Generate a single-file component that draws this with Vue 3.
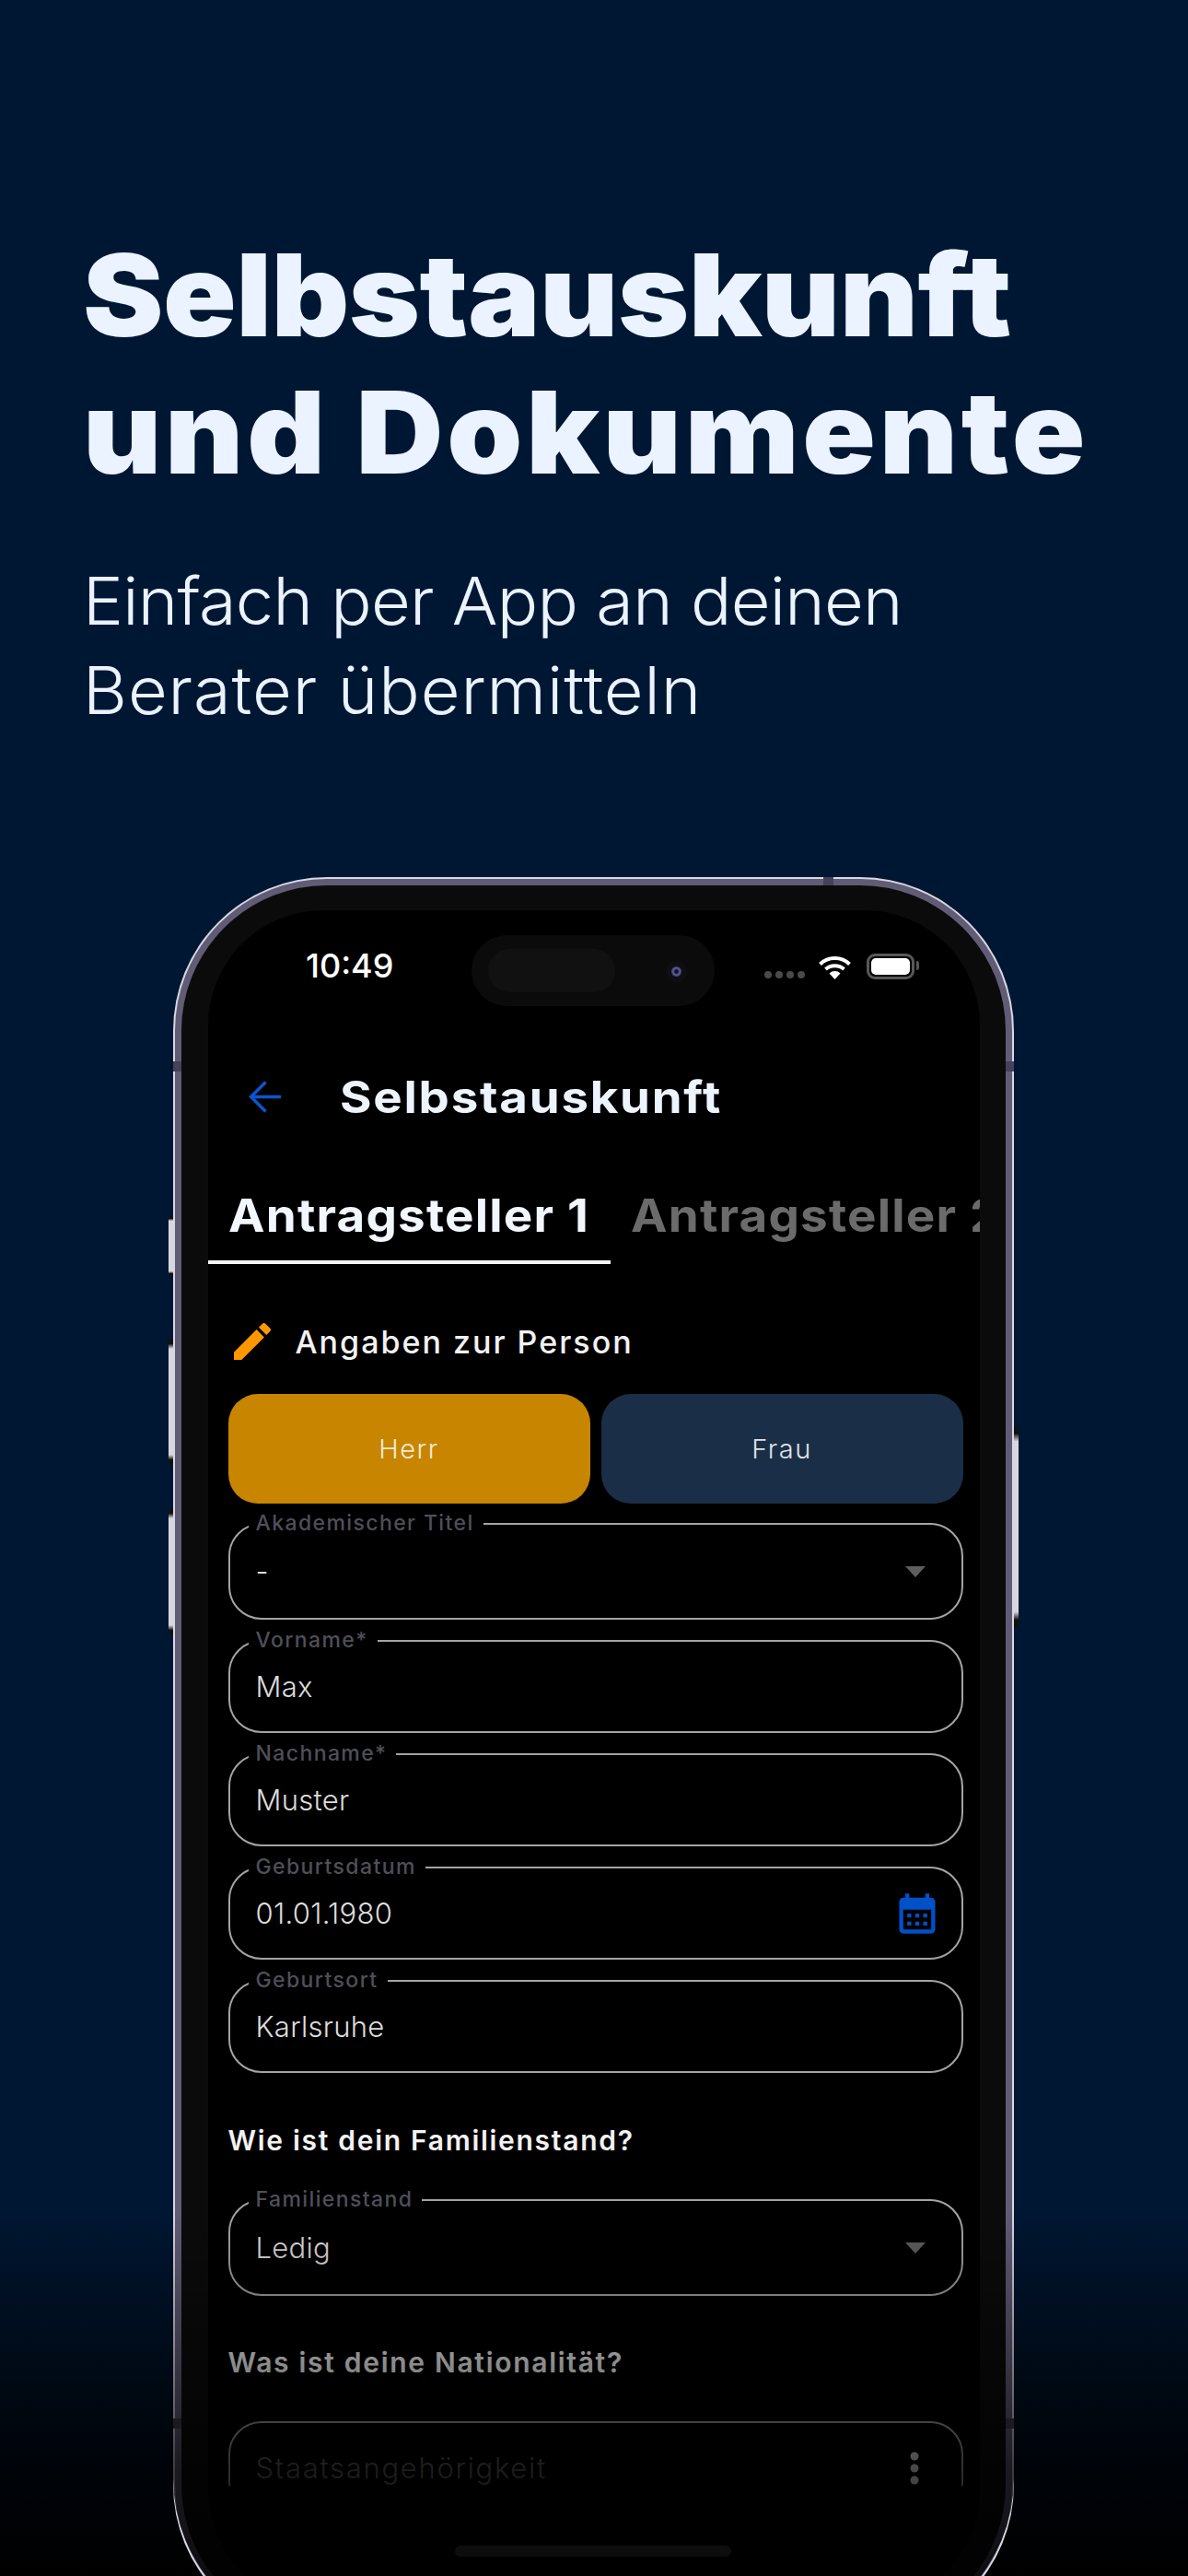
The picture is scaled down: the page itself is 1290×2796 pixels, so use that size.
<template>
  <div class="page">
    <!-- headline -->
    <div class="intro">
      <h1>
        <span class="title-a">Selbstauskunft</span>
        <span class="title-b">und Dokumente</span>
      </h1>
      <p>
        <span class="sub-a">Einfach per App an deinen</span>
        <span class="sub-b">Berater übermitteln</span>
      </p>
    </div>

    <!-- device -->
    <div class="phone">
      <span class="side-btn side-btn--mute"></span>
      <span class="side-btn side-btn--up"></span>
      <span class="side-btn side-btn--down"></span>
      <span class="side-btn side-btn--power"></span>
      <span class="band band--top"></span>
      <span class="band band--left"></span>
      <span class="band band--right"></span>
      <span class="band band--left-low"></span>
      <span class="band band--right-low"></span>

      <div class="screen">
        <div class="screen-content">
          <!-- status bar -->
          <div class="status-bar">
            <span class="time">10:49</span>
            <div class="island">
              <span class="island-pill"></span>
              <span class="island-cam"></span>
            </div>
            <div class="signal">
              <i v-for="n in 4" :key="n"></i>
            </div>
            <svg class="wifi" width="37" height="27" viewBox="0 0 37 27">
              <path d="M2.500 10.500a23 23 0 0 1 32 0" fill="none" stroke="#fff" stroke-width="4" />
              <path d="M8.500 16a15 15 0 0 1 20 0" fill="none" stroke="#fff" stroke-width="4" />
              <path d="M18.500 27l-6-6.600a9 9 0 0 1 12 0z" fill="#fff" />
            </svg>
            <div class="battery"><span></span></div>
          </div>

          <!-- app bar -->
          <div class="app-bar">
            <svg width="35" height="35" viewBox="0 0 35 35" fill="none" stroke="#0a55d0" stroke-width="3.400">
              <path d="M35 17.500H3" />
              <path d="M18.500 1.500L2.500 17.500L18.500 33.500" />
            </svg>
            <span class="app-title">Selbstauskunft</span>
          </div>

          <!-- tabs -->
          <div class="tabs">
            <div class="tab tab--active"><span>Antragsteller 1</span></div>
            <div class="tab"><span>Antragsteller 2</span></div>
          </div>

          <div class="form">
            <div class="section-row">
              <svg width="40" height="40" viewBox="3 3 18 18" fill="#ff9800">
                <path d="M3 17.250V21h3.750L17.810 9.940l-3.750-3.750L3 17.250zM20.710 7.040c.39-.39.39-1.020 0-1.410l-2.340-2.340c-.39-.39-1.020-.39-1.410 0l-1.830 1.830 3.750 3.750 1.830-1.830z" />
              </svg>
              <span>Angaben zur Person</span>
            </div>

            <div class="gender">
              <div class="gender-btn gender-btn--active">Herr</div>
              <div class="gender-btn">Frau</div>
            </div>

            <div class="fields">
              <div v-for="field in fields" :key="field.label" class="field" :class="{ 'field--tall': field.tall }">
                <span class="field-label">{{ field.label }}</span>
                <span class="field-value">{{ field.value }}</span>
                <svg v-if="field.icon === 'select'" class="caret" width="22" height="12" viewBox="0 0 22 12">
                  <path d="M0 0h22L11 12z" fill="#5e5e5e" />
                </svg>
                <svg v-if="field.icon === 'date'" class="calendar" width="52" height="52" viewBox="0 0 24 24" fill="#0050c8">
                  <path d="M19 4h-1V2h-2v2H8V2H6v2H5c-1.100 0-2 .9-2 2v14c0 1.100.9 2 2 2h14c1.100 0 2-.9 2-2V6c0-1.100-.9-2-2-2zm0 16H5V10h14v10zM9 14H7v-2h2v2zm4 0h-2v-2h2v2zm4 0h-2v-2h2v2zm-8 4H7v-2h2v2zm4 0h-2v-2h2v2zm4 0h-2v-2h2v2z" />
                </svg>
              </div>
            </div>

            <div class="question question--first">Wie ist dein Familienstand?</div>
            <div class="field field--tall field--spaced">
              <span class="field-label">Familienstand</span>
              <span class="field-value">Ledig</span>
              <svg class="caret" width="22" height="12" viewBox="0 0 22 12">
                <path d="M0 0h22L11 12z" fill="#5e5e5e" />
              </svg>
            </div>

            <div class="question">Was ist deine Nationalität?</div>
            <div class="field field--spaced">
              <span class="field-value field-value--empty">Staatsangehörigkeit</span>
              <svg class="more" width="10" height="36" viewBox="0 0 10 36" fill="#fff">
                <circle cx="5" cy="5" r="4.500" />
                <circle cx="5" cy="18" r="4.500" />
                <circle cx="5" cy="31" r="4.500" />
              </svg>
            </div>
          </div>
        </div>
      </div>

      <div class="fade"></div>
      <span class="home-bar"></span>
    </div>
  </div>
</template>

<script setup>
const fields = [
  { label: 'Akademischer Titel', value: '-', icon: 'select', tall: true },
  { label: 'Vorname*', value: 'Max' },
  { label: 'Nachname*', value: 'Muster' },
  { label: 'Geburtsdatum', value: '01.01.1980', icon: 'date' },
  { label: 'Geburtsort', value: 'Karlsruhe' }
]
</script>

<style scoped>
.page {
  position: relative;
  width: 1290px;
  height: 2796px;
  overflow: hidden;
  background: linear-gradient(#001733 0, #001733 2396px, #000f22 2500px, #000811 2600px, #00040a 2670px, #000 2796px);
  font-family: Inter, "Open Sans", sans-serif;
}

/* headline: Inter is narrower than the original face, so it gets widened a bit */
.intro {
  padding: 246px 0 0 90px;
  color: #eaf3ff;
}

.intro h1 {
  margin: 0;
  font-size: 124px;
  line-height: 149px;
  font-weight: 900;
}

.intro span {
  display: block;
  transform-origin: left center;
}

.title-a {
  letter-spacing: -0.5px;
  transform: scaleX(1.06);
}

.title-b {
  letter-spacing: 3.5px;
  transform: scaleX(1.06);
}

.intro p {
  margin: 60px 0 0;
  font-size: 71px;
  line-height: 97px;
  font-weight: 300;
}

.sub-a {
  letter-spacing: -0.7px;
  transform: scaleX(1.04);
}

.sub-b {
  letter-spacing: 0.9px;
  transform: scaleX(1.04);
}

/* device */
.phone {
  position: relative;
  box-sizing: border-box;
  width: 909px;
  height: 1908px;
  margin: 156px 0 0 190px;
  padding: 27px 28px 27px 29px;
  background: #0b0b0b;
  border: 7px solid #615c76;
  border-radius: 165px;
  box-shadow: 0 0 0 2px #d9d7e2;
}

.side-btn {
  position: absolute;
  width: 5px;
  background: linear-gradient(#111 0 4%, #d8d7e0 8% 92%, #111 96%);
  border-radius: 2px;
}

.side-btn--mute { left: -14px; top: 359px; height: 65px; }
.side-btn--up { left: -14px; top: 492px; height: 137px; }
.side-btn--down { left: -14px; top: 676px; height: 138px; }
.side-btn--power { right: -14px; top: 586px; height: 220px; }

.band {
  position: absolute;
  background: #45415a;
}

.band--top { top: -9px; left: 697px; width: 11px; height: 9px; }
.band--left { left: -9px; top: 191px; width: 9px; height: 11px; }
.band--right { right: -9px; top: 191px; width: 9px; height: 11px; }
.band--left-low { left: -9px; top: 1664px; width: 9px; height: 11px; background: #1a1a1f; z-index: 3; }
.band--right-low { right: -9px; top: 1664px; width: 9px; height: 11px; background: #1a1a1f; z-index: 3; }

.screen {
  height: 100%;
  background: #000;
  border-radius: 125px;
  overflow: hidden;
}

.screen-content {
  height: 1710px;
  overflow: hidden;
}

/* status bar */
.status-bar {
  display: flex;
  align-items: flex-start;
  height: 120px;
  padding-left: 106px;
}

.time {
  width: 97px;
  margin-top: 38px;
  margin-right: 83px;
  font-size: 36px;
  line-height: 44px;
  font-weight: 500;
  color: #fff;
}

.island {
  position: relative;
  width: 264px;
  height: 77px;
  margin-top: 27px;
  background: #0b0b0b;
  border-radius: 39px;
}

.island-pill {
  position: absolute;
  left: 18px;
  top: 15px;
  width: 138px;
  height: 47px;
  background: #111;
  border-radius: 24px;
}

.island-cam {
  position: absolute;
  left: 217px;
  top: 34px;
  width: 11px;
  height: 11px;
  background: radial-gradient(circle, #14122a 0 20%, #5f5a9a 45%, #1c1a30 100%);
  border-radius: 50%;
  box-shadow: 0 0 0 6px #0f0f13;
}

.signal {
  display: flex;
  gap: 4px;
  margin: 66px 0 0 54px;
}

.signal i {
  width: 8px;
  height: 8px;
  border-radius: 50%;
  background: #4a4a4a;
}

.wifi {
  margin: 48px 0 0 14px;
}

.battery {
  position: relative;
  box-sizing: border-box;
  width: 52px;
  height: 28px;
  margin: 47px 0 0 16px;
  padding: 2px;
  border: 3px solid #585858;
  border-radius: 9px;
}

.battery span {
  display: block;
  height: 100%;
  background: #fff;
  border-radius: 5px;
}

.battery::after {
  content: "";
  position: absolute;
  right: -8px;
  top: 5px;
  width: 3px;
  height: 10px;
  background: #585858;
  border-radius: 0 3px 3px 0;
}

/* app bar */
.app-bar {
  display: flex;
  align-items: center;
  gap: 64px;
  height: 164px;
  padding-left: 44px;
}

.app-title {
  font-size: 48px;
  font-weight: 700;
  letter-spacing: 1.6px;
  color: #eef4ff;
  transform: scaleX(1.1);
  transform-origin: left center;
}

/* tabs */
.tabs {
  display: flex;
  overflow: hidden;
  white-space: nowrap;
}

.tab {
  flex-shrink: 0;
  box-sizing: border-box;
  width: 437px;
  padding: 17px 0 19px 22px;
  font-size: 50px;
  line-height: 60px;
  font-weight: 700;
  letter-spacing: 1.1px;
  color: #6b6b6b;
  border-bottom: 4px solid transparent;
}

.tab span {
  display: block;
  transform: scaleX(1.06);
  transform-origin: left center;
}

.tab--active {
  color: #f2f6ff;
  border-bottom-color: #f4f4f4;
}

/* form */
.form {
  padding: 60px 18.5px 0 21.5px;
}

.section-row {
  display: flex;
  align-items: center;
  gap: 27px;
  height: 48px;
  padding-left: 6px;
  font-size: 34px;
  font-weight: 500;
  letter-spacing: 2px;
  color: #f2f2f2;
}

.gender {
  display: flex;
  gap: 12px;
  margin-top: 33px;
}

.gender-btn {
  display: flex;
  flex: 1;
  align-items: center;
  justify-content: center;
  height: 119px;
  font-size: 29px;
  font-weight: 300;
  letter-spacing: 1.500px;
  color: #dfe3e8;
  background: #1b2e47;
  border-radius: 32px;
}

.gender-btn--active {
  color: #f5ead6;
  background: #c78500;
}

.fields {
  display: flex;
  flex-direction: column;
  gap: 22px;
  margin-top: 21px;
}

.field {
  position: relative;
  display: flex;
  align-items: center;
  box-sizing: border-box;
  height: 101px;
  padding-left: 28px;
  border: 2.5px solid #a4a4a4;
  border-radius: 36px;
}

.field--tall {
  height: 105px;
}

.field--spaced {
  margin-top: 44px;
}

.field-label {
  position: absolute;
  left: 20px;
  top: -16px;
  padding: 0 10px 0 8px;
  font-size: 23px;
  line-height: 28px;
  font-weight: 500;
  letter-spacing: 1.400px;
  color: #4f4f59;
  background: #000;
}

.field-value {
  font-size: 31px;
  font-weight: 300;
  letter-spacing: 0.3px;
  color: #dcdcdc;
}

.field-value--empty {
  letter-spacing: 1.700px;
  color: #666;
}

.caret {
  margin-left: auto;
  margin-right: 39px;
}

.calendar {
  margin-left: auto;
  margin-right: 22px;
}

.more {
  margin-left: auto;
  margin-right: 46px;
}

.question {
  margin-top: 52px;
  font-size: 30px;
  line-height: 40px;
  font-weight: 600;
  letter-spacing: 1.700px;
  color: #f2f2f2;
}

.question--first {
  margin-top: 53px;
}

.home-bar {
  position: absolute;
  z-index: 3;
  left: 297px;
  top: 1802px;
  width: 300px;
  height: 12px;
  background: #0d0d0d;
  border-radius: 6px;
}

/* bottom fade over the device */
.fade {
  position: absolute;
  z-index: 2;
  left: -9px;
  right: -9px;
  top: 1439px;
  bottom: -9px;
  border-radius: 0 0 174px 174px;
  background: linear-gradient(rgba(0, 0, 0, 0) 0, rgba(0, 0, 0, 0.42) 164px, rgba(0, 0, 0, 0.72) 280px, rgba(0, 0, 0, 0.86) 396px);
}
</style>
